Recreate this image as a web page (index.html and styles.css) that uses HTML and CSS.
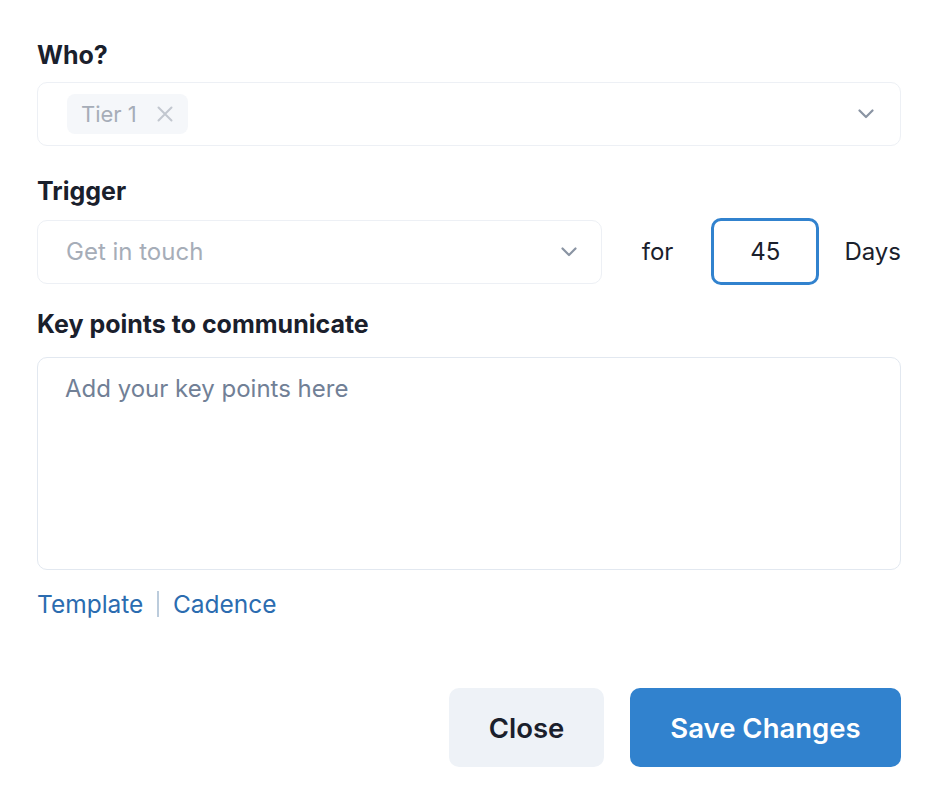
FILE: index.html
```html
<!DOCTYPE html>
<html lang="en">
<head>
<meta charset="utf-8">
<title>Form</title>
<link rel="stylesheet" href="styles.css">
</head>
<body>
<form class="form">
  <div class="field">
    <label class="label">Who?</label>
    <div class="select">
      <span class="tag">Tier 1
        <svg class="tag-x" width="16" height="16" viewBox="0 0 16 16"><path d="M1.5 1.5L14.5 14.5M14.5 1.5L1.5 14.5" stroke="currentColor" stroke-width="2" stroke-linecap="round"/></svg>
      </span>
      <svg class="chev" width="16" height="10" viewBox="0 0 16 10"><path d="M1.5 1.5L8 8L14.5 1.5" fill="none" stroke="currentColor" stroke-width="2.2" stroke-linecap="round" stroke-linejoin="round"/></svg>
    </div>
  </div>
  <div class="field">
    <label class="label">Trigger</label>
    <div class="trigger-row">
      <div class="select trigger-select">
        <span class="placeholder">Get in touch</span>
        <svg class="chev" width="16" height="10" viewBox="0 0 16 10"><path d="M1.5 1.5L8 8L14.5 1.5" fill="none" stroke="currentColor" stroke-width="2.2" stroke-linecap="round" stroke-linejoin="round"/></svg>
      </div>
      <span class="word for">for</span>
      <div class="num">45</div>
      <span class="word">Days</span>
    </div>
  </div>
  <div class="field">
    <label class="label">Key points to communicate</label>
    <div class="textarea">Add your key points here</div>
    <div class="links">
      <a class="link">Template</a>
      <span class="sep"></span>
      <a class="link">Cadence</a>
    </div>
  </div>
  <div class="actions">
    <button type="button" class="btn btn-close">Close</button>
    <button type="button" class="btn btn-save">Save Changes</button>
  </div>
</form>
</body>
</html>
```
FILE: styles.css
```css
html, body {
  margin: 0;
  padding: 0;
  background: #ffffff;
}
body {
  font-family: Inter, "Noto Sans", sans-serif;
  color: #1a202c;
}
.form {
  width: 864px;
  padding: 38px 0 0 37px;
  display: flex;
  flex-direction: column;
}
.field {
  display: flex;
  flex-direction: column;
}
.label {
  font-weight: 700;
  font-size: 25px;
  line-height: 34px;
  color: #1a202c;
  margin-bottom: 10px;
}
.select {
  height: 64px;
  box-sizing: border-box;
  border: 1.5px solid #edf0f5;
  border-radius: 10px;
  display: flex;
  align-items: center;
  padding: 0 26px 0 29px;
}
.select .chev {
  margin-left: auto;
  color: #8a94a3;
}
.field:nth-child(2) {
  margin-top: 28px;
}
.field:nth-child(3) {
  margin-top: 22px;
}
.field:nth-child(3) .label {
  margin-bottom: 16px;
}
.tag {
  display: inline-flex;
  align-items: center;
  gap: 20px;
  height: 40px;
  padding: 0 15px 0 14px;
  background: #f5f7fa;
  border-radius: 8px;
  font-size: 22px;
  color: #a6adb8;
}
.tag-x {
  color: #c2c7cf;
  width: 16px;
  height: 16px;
}
.trigger-row {
  display: flex;
  align-items: center;
}
.trigger-select {
  flex: 1;
  padding-left: 28px;
  padding-right: 24px;
}
.placeholder {
  font-size: 24px;
  color: #a6adb8;
}
.word {
  font-size: 24px;
  color: #1a202c;
}
.for {
  margin-left: 40px;
  margin-right: 38px;
}
.num {
  width: 108px;
  height: 67px;
  box-sizing: border-box;
  border: 3px solid #3182ce;
  border-radius: 10px;
  display: flex;
  align-items: center;
  justify-content: center;
  font-size: 24px;
  color: #1a202c;
  margin-right: 25px;
}
.textarea {
  height: 213px;
  box-sizing: border-box;
  border: 1.5px solid #e2e8f0;
  border-radius: 10px;
  padding: 16px 27px;
  font-size: 24px;
  color: #718096;
}
.links {
  display: flex;
  align-items: center;
  margin-top: 19px;
  gap: 14px;
}
.link {
  font-size: 24.5px;
  color: #2b6cb0;
}
.sep {
  width: 1.5px;
  height: 26px;
  background: #bcccdc;
}
.actions {
  display: flex;
  justify-content: flex-end;
  gap: 26px;
  margin-top: 69px;
}
.btn {
  height: 79px;
  border: none;
  border-radius: 10px;
  font-family: Inter, "Noto Sans", sans-serif;
  font-weight: 600;
  font-size: 27.5px;
  padding: 0;
}
.btn-close {
  width: 155px;
  background: #eef2f7;
  color: #1a202c;
}
.btn-save {
  width: 271px;
  background: #3182ce;
  color: #ffffff;
}
```
